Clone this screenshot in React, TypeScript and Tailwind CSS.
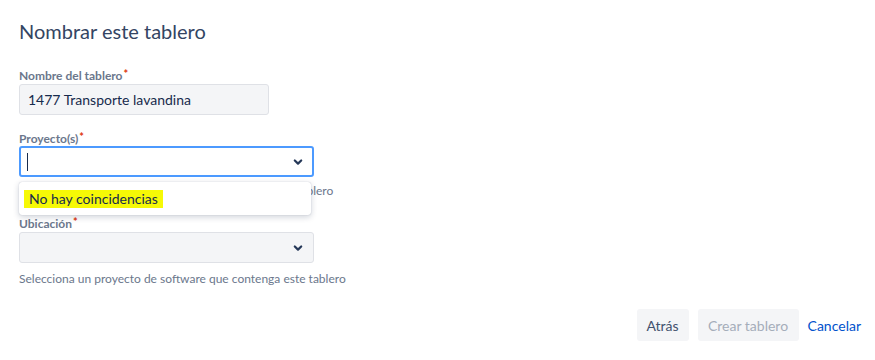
function Label({ text }: { text: string }) {
  return (
    <div className="flex items-start text-[12px] font-bold leading-[14px] text-[#6b778c]">
      <span>{text}</span>
      <span className="text-[11px] leading-[9px] ml-[1px] text-[#de350b]">*</span>
    </div>
  );
}

function Chevron() {
  return (
    <svg width="10" height="10" viewBox="0 0 10 10" className="text-[#253858]">
      <path d="M1.8 3.5 L5 6.6 L8.2 3.5" fill="none" stroke="currentColor" strokeWidth="2.2" strokeLinecap="round" strokeLinejoin="round" />
    </svg>
  );
}

export default function App() {
  return (
    <div
      className="w-[875px] h-[360px] bg-white pl-[19px] pr-[14px] pt-[18px] text-[#172b4d]"
      style={{ fontFamily: 'Lato, "Noto Sans", sans-serif' }}
    >
      <h1 className="text-[20px] leading-[26px] font-normal text-[#344563]">Nombrar este tablero</h1>

      <div className="mt-[25px]">
        <Label text="Nombre del tablero" />
        <div className="mt-[1px] w-[250px] h-[31px] rounded-[3px] border border-[#dfe1e6] bg-[#f4f5f7] flex items-center px-[8px] text-[14px] text-[#172b4d]">
          1477 Transporte lavandina
        </div>
      </div>

      <div className="mt-[17px] relative">
        <Label text="Proyecto(s)" />
        <div className="w-[295px] h-[31px] rounded-[3px] border-2 border-[#4c9aff] bg-white flex items-center justify-between pl-[6px] pr-[9px]">
          <span className="w-[1px] h-[18px] bg-[#172b4d]" />
          <Chevron />
        </div>
        <p className="mt-[6px] text-[12px] leading-[16px] text-[#6b778c]">
          Selecciona uno o más proyectos que contengan este tablero
        </p>
        <div className="absolute left-0 top-[50px] w-[292px] h-[33px] bg-white rounded-[3px] shadow-[0_2px_6px_rgba(9,30,66,0.2),0_0_1px_rgba(9,30,66,0.3)] flex items-center px-[5px]">
          <span className="bg-[#f6f906] px-[5px] text-[14px] leading-[18px] text-[#172b4d]">No hay coincidencias</span>
        </div>
      </div>

      <div className="mt-[18px]">
        <Label text="Ubicación" />
        <div className="mt-[1px] w-[295px] h-[31px] rounded-[3px] border border-[#dfe1e6] bg-[#f4f5f7] flex items-center justify-end pr-[10px]">
          <Chevron />
        </div>
        <p className="mt-[8px] text-[12px] leading-[16px] text-[#6b778c]">
          Selecciona un proyecto de software que contenga este tablero
        </p>
      </div>

      <div className="mt-[22px] flex justify-end items-center gap-[9px]">
        <button className="h-[32px] w-[52px] rounded-[3px] bg-[#f4f5f7] text-[14px] text-[#42526e]">Atrás</button>
        <button className="h-[32px] w-[101px] rounded-[3px] bg-[#f4f5f7] text-[14px] text-[#a5adba]">Crear tablero</button>
        <button className="h-[32px] text-[14px] text-[#0052cc]">Cancelar</button>
      </div>
    </div>
  );
}
